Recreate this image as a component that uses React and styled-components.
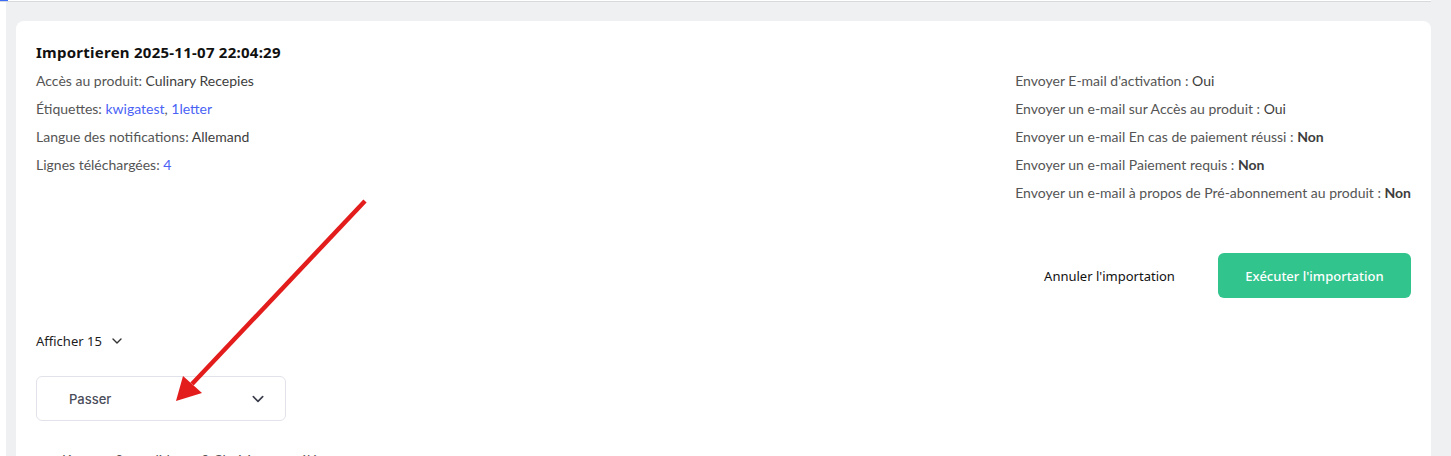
import React from 'react';
import styled, { createGlobalStyle } from 'styled-components';

const GlobalStyle = createGlobalStyle`
  html, body {
    margin: 0;
    padding: 0;
    background: #eef0f2;
    overflow: hidden;
  }
  * { box-sizing: border-box; }
`;

const Page = styled.div`
  position: relative;
  width: 1451px;
  height: 456px;
  overflow: hidden;
  font-family: Lato, 'Noto Sans', sans-serif;
`;

const TopStrip = styled.div`
  height: 2px;
  width: 1431px;
  background: #ffffff;
  border-bottom: 1px solid #d6d9de;
  display: flex;
`;

const TopIndicator = styled.span`
  width: 8px;
  height: 1px;
  background: #3d6df5;
`;

const Body = styled.div`
  display: flex;
  height: 100%;
`;

const Rail = styled.div`
  width: 6px;
  background: #ffffff;
  flex-shrink: 0;
`;

const Main = styled.div`
  flex: 1;
  padding: 19px 20px 0 10px;
`;

const Card = styled.div`
  background: #ffffff;
  border-radius: 8px 8px 0 0;
  padding: 21px 20px 0 20px;
  min-height: 480px;
`;

const Title = styled.h2`
  margin: 0;
  font-family: 'Noto Sans', sans-serif;
  font-size: 15px;
  font-weight: 700;
  letter-spacing: 0.25px;
  line-height: 20px;
  color: #111;
`;

const InfoRow = styled.div`
  display: flex;
  justify-content: space-between;
  margin-top: 5px;
`;

const InfoList = styled.div`
  display: flex;
  flex-direction: column;
`;

const Line = styled.div`
  font-size: 14px;
  line-height: 28px;
  color: #555555;
  white-space: nowrap;
`;

const Value = styled.span`
  color: ${(p) => (p.$link ? '#4a63f5' : '#3d3d3d')};
  font-weight: ${(p) => (p.$strong ? 700 : 400)};
`;

const Actions = styled.div`
  display: flex;
  justify-content: flex-end;
  gap: 12px;
  margin-top: 46px;
`;

const ActionButton = styled.button`
  width: 193px;
  height: 45px;
  border: none;
  border-radius: 6px;
  font-family: 'Noto Sans', sans-serif;
  font-size: 13px;
  font-weight: ${(p) => (p.$primary ? 500 : 400)};
  background: ${(p) => (p.$primary ? '#31c48d' : 'transparent')};
  color: ${(p) => (p.$primary ? '#ffffff' : '#111111')};
  cursor: pointer;
`;

const PageSize = styled.div`
  display: flex;
  align-items: center;
  gap: 9px;
  margin-top: 33px;
  font-family: 'Noto Sans', sans-serif;
  font-size: 13px;
  line-height: 20px;
  color: #1d1d1d;
`;

const Select = styled.div`
  width: 250px;
  height: 45px;
  margin-top: 25px;
  border: 1px solid #e2e3ea;
  border-radius: 6px;
  display: flex;
  align-items: center;
  justify-content: space-between;
  padding: 0 20px 0 32px;
  font-family: Inter, Roboto, sans-serif;
  font-size: 13px;
  font-weight: 500;
  color: #4a4d5a;
`;

const Stats = styled.div`
  margin-top: 29px;
  padding-left: 26px;
  display: flex;
  gap: 18px;
  font-size: 14px;
  line-height: 20px;
  color: #555555;
`;

const Arrow = styled.svg`
  position: absolute;
  left: 0;
  top: 0;
  pointer-events: none;
`;

const Chevron = ({ size = 12, color = '#3a3d4a' }) => (
  <svg width={size} height={size} viewBox="0 0 12 12" fill="none">
    <path d="M2 4l4 4 4-4" stroke={color} strokeWidth="1.4" strokeLinecap="round" strokeLinejoin="round" />
  </svg>
);

const leftInfo = [
  { label: 'Accès au produit: ', values: [{ text: 'Culinary Recepies' }] },
  { label: 'Étiquettes: ', values: [{ text: 'kwigatest', link: true }, { text: ', ', sep: true }, { text: '1letter', link: true }] },
  { label: 'Langue des notifications: ', values: [{ text: 'Allemand' }] },
  { label: 'Lignes téléchargées: ', values: [{ text: '4', link: true }] },
];

const rightInfo = [
  ["Envoyer E-mail d'activation : ", 'Oui'],
  ['Envoyer un e-mail sur Accès au produit : ', 'Oui'],
  ['Envoyer un e-mail En cas de paiement réussi : ', 'Non'],
  ['Envoyer un e-mail Paiement requis : ', 'Non'],
  ['Envoyer un e-mail à propos de Pré-abonnement au produit : ', 'Non'],
];

const App = () => {
  return (
    <Page>
      <GlobalStyle />
      <TopStrip>
        <TopIndicator />
      </TopStrip>
      <Body>
        <Rail />
        <Main>
          <Card>
            <Title>Importieren 2025-11-07 22:04:29</Title>
            <InfoRow>
              <InfoList>
                {leftInfo.map((item) => (
                  <Line key={item.label}>
                    {item.label}
                    {item.values.map((v, i) =>
                      v.sep ? (
                        <span key={i}>{v.text}</span>
                      ) : (
                        <Value key={i} $link={v.link}>{v.text}</Value>
                      )
                    )}
                  </Line>
                ))}
              </InfoList>
              <InfoList>
                {rightInfo.map(([label, value]) => (
                  <Line key={label}>
                    {label}
                    <Value $strong={value === 'Non'}>{value}</Value>
                  </Line>
                ))}
              </InfoList>
            </InfoRow>
            <Actions>
              <ActionButton>Annuler l'importation</ActionButton>
              <ActionButton $primary>Exécuter l'importation</ActionButton>
            </Actions>
            <PageSize>
              Afficher 15
              <Chevron size={12} color="#333" />
            </PageSize>
            <Select>
              Passer
              <Chevron size={14} />
            </Select>
            <Stats>
              <span>Kurse</span>
              <span>0</span>
              <span>valides</span>
              <span>0 Choisissez un élément</span>
            </Stats>
          </Card>
        </Main>
      </Body>
      <Arrow width="1451" height="456" viewBox="0 0 1451 456">
        <line x1="365" y1="201" x2="192" y2="384" stroke="#e31c1c" strokeWidth="4.5" strokeLinecap="butt" />
        <polygon points="176,401 183,376 202,393" fill="#e31c1c" />
      </Arrow>
    </Page>
  );
};

export default App;
